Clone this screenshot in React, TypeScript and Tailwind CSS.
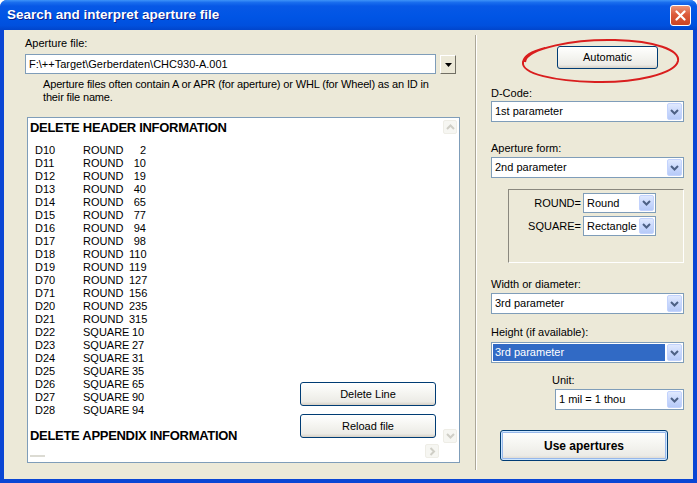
import React from "react";

const Chevron = ({ color = "#4D6185" }: { color?: string }) => (
  <svg width="9" height="6" viewBox="0 0 9 6">
    <path d="M1 1 L4.5 4.5 L8 1" fill="none" stroke={color} strokeWidth="2" />
  </svg>
);

function Combo({
  value,
  className = "",
  highlight = false,
  small = false,
}: {
  value: string;
  className?: string;
  highlight?: boolean;
  small?: boolean;
}) {
  return (
    <div
      className={`relative border border-[#7F9DB9] bg-white flex items-center ${
        small ? "h-[20px]" : "h-[21px]"
      } ${className}`}
    >
      {highlight ? (
        <div className="absolute left-[1px] top-[1px] bottom-[1px] right-[18px] bg-[#316AC5]" />
      ) : null}
      <span className={`relative pl-[3px] leading-[13px] ${highlight ? "text-white" : "text-black"}`}>
        {value}
      </span>
      <div className="absolute right-[1px] top-[1px] bottom-[1px] w-[15px] rounded-[2px] border border-[#C3D3FD] bg-[linear-gradient(180deg,#E0E9FE_0%,#C9D8FC_50%,#B6CAF8_100%)] flex items-center justify-center">
        <Chevron />
      </div>
    </div>
  );
}

function XPButton({
  children,
  className = "",
}: {
  children: React.ReactNode;
  className?: string;
}) {
  return (
    <div
      className={`flex items-center justify-center border border-[#003C74] rounded-[3px] bg-[linear-gradient(180deg,#FFFFFF_0%,#F5F5F1_45%,#ECEBE6_85%,#D6D0C5_100%)] text-black ${className}`}
    >
      {children}
    </div>
  );
}

const rows: [string, string, string][] = [
  ["D10", "ROUND", "2"],
  ["D11", "ROUND", "10"],
  ["D12", "ROUND", "19"],
  ["D13", "ROUND", "40"],
  ["D14", "ROUND", "65"],
  ["D15", "ROUND", "77"],
  ["D16", "ROUND", "94"],
  ["D17", "ROUND", "98"],
  ["D18", "ROUND", "110"],
  ["D19", "ROUND", "119"],
  ["D70", "ROUND", "127"],
  ["D71", "ROUND", "156"],
  ["D20", "ROUND", "235"],
  ["D21", "ROUND", "315"],
  ["D22", "SQUARE", "10"],
  ["D23", "SQUARE", "27"],
  ["D24", "SQUARE", "31"],
  ["D25", "SQUARE", "35"],
  ["D26", "SQUARE", "65"],
  ["D27", "SQUARE", "90"],
  ["D28", "SQUARE", "94"],
];

const FadedArrow = ({ dir, className }: { dir: "up" | "down" | "right"; className: string }) => {
  const d =
    dir === "up" ? "M1 5 L4.5 1.5 L8 5" : dir === "down" ? "M1 1 L4.5 4.5 L8 1" : "M1.5 1 L5 4.5 L1.5 8";
  const vb = dir === "right" ? "0 0 7 9" : "0 0 9 6";
  return (
    <div
      className={`absolute w-[14px] h-[14px] rounded-[2px] border border-[#EEEDE6] bg-[#F6F6F2] flex items-center justify-center ${className}`}
    >
      <svg width={dir === "right" ? 7 : 9} height={dir === "right" ? 9 : 6} viewBox={vb}>
        <path d={d} fill="none" stroke="#CFCEC6" strokeWidth="2" />
      </svg>
    </div>
  );
};

export default function App() {
  return (
    <div className="relative w-[697px] h-[483px] flex flex-col overflow-hidden rounded-t-[7px] bg-[#0A46D4] font-['Liberation_Sans',Arial,sans-serif] text-[11px] text-black">
      {/* Title bar */}
      <div className="h-[30px] shrink-0 flex items-center justify-between pl-[7px] pr-[6px] bg-[linear-gradient(180deg,#3E93F8_0%,#1A6EEE_8%,#0758E6_20%,#0055E5_55%,#0050DE_85%,#0145CB_100%)]">
        <span className="text-white font-bold text-[13.5px] leading-[16px] [text-shadow:1px_1px_0_#0A1C8A]">
          Search and interpret aperture file
        </span>
        <div className="w-[21px] h-[21px] rounded-[3px] border border-white bg-[linear-gradient(180deg,#EC9477_0%,#DC5B3B_45%,#CB4423_100%)] flex items-center justify-center">
          <svg width="11" height="11" viewBox="0 0 11 11">
            <path d="M1.5 1.5 L9.5 9.5 M9.5 1.5 L1.5 9.5" stroke="white" strokeWidth="2.2" strokeLinecap="round" />
          </svg>
        </div>
      </div>

      {/* Body */}
      <div className="flex-1 px-[4px] pb-[4px]">
        <div className="h-full bg-[#ECE9D8] flex">
          {/* Left column */}
          <div className="w-[471px] flex flex-col pl-[21px]">
            <div className="mt-[7px] leading-[13px]">Aperture file:</div>
            <div className="mt-[4px] flex items-start">
              <div className="w-[411px] h-[20px] border border-[#7F9DB9] bg-white flex items-center pl-[3px] leading-[13px]">
                F:\++Target\Gerberdaten\CHC930-A.001
              </div>
              <div className="ml-[4px] mt-[1px] w-[16px] h-[19px] border-t border-l border-t-white border-l-white border-b border-r border-b-[#716F64] border-r-[#716F64] bg-[#ECE9D8] flex items-center justify-center">
                <svg width="7" height="4" viewBox="0 0 7 4">
                  <path d="M0 0 L7 0 L3.5 4 Z" fill="black" />
                </svg>
              </div>
            </div>
            <div className="mt-[4px] pl-[18px] leading-[13px] tracking-[-0.15px]">
              <div>Aperture files often contain A or APR (for aperture) or WHL (for Wheel) as an ID in</div>
              <div>their file name.</div>
            </div>

            {/* List box */}
            <div className="relative mt-[13px] ml-[2px] w-[433px] h-[346px] border border-[#7F9DB9] bg-white overflow-hidden">
              <div className="pl-[2px] pt-[3px] text-[13px] leading-[14px] font-bold tracking-[-0.3px]">
                DELETE HEADER INFORMATION
              </div>
              <div className="mt-[9px] pl-[7px]">
                {rows.map(([code, type, num]) => (
                  <div key={code} className="h-[13px] flex leading-[13px]">
                    <span className="w-[48px]">{code}</span>
                    <span className="w-[46px] whitespace-nowrap">{type}</span>
                    {type === "ROUND" ? (
                      <span className="w-[17px] text-right">{num}</span>
                    ) : (
                      <span className="pl-[3px]">{num}</span>
                    )}
                  </div>
                ))}
              </div>
              <div className="mt-[12px] pl-[2px] text-[13px] leading-[14px] font-bold tracking-[-0.3px]">
                DELETE APPENDIX INFORMATION
              </div>

              <FadedArrow dir="up" className="right-[2px] top-[2px]" />
              <FadedArrow dir="down" className="right-[2px] top-[311px]" />
              <FadedArrow dir="right" className="left-[397px] top-[326px]" />
              <div className="absolute left-[2px] top-[337px] w-[15px] h-[2px] bg-[#DCDBD3]" />

              <XPButton className="absolute left-[272px] top-[264px] w-[136px] h-[24px]">Delete Line</XPButton>
              <XPButton className="absolute left-[272px] top-[296px] w-[136px] h-[24px]">Reload file</XPButton>
            </div>
          </div>

          {/* Separator */}
          <div className="w-[2px] mt-[5px] mb-[9px] border-l border-l-[#ACA899] border-r border-r-white" />

          {/* Right column */}
          <div className="w-[216px] flex flex-col pl-[14px]">
            <XPButton className="mt-[16px] ml-[66px] w-[101px] h-[23px]">Automatic</XPButton>

            <div className="mt-[18px] leading-[13px]">D-Code:</div>
            <Combo value="1st parameter" className="mt-[1px] w-[193px]" />

            <div className="mt-[20px] leading-[13px]">Aperture form:</div>
            <Combo value="2nd parameter" className="mt-[2px] w-[193px]" />

            <div className="mt-[11px] ml-[17px] w-[176px] h-[74px] border-t border-l border-t-[#8A887E] border-l-[#8A887E] border-b border-r border-b-white border-r-white flex flex-col pt-[3px]">
              <div className="flex items-center">
                <span className="w-[73px] text-right pr-[1px]">ROUND=</span>
                <Combo value="Round" small className="ml-[1px] w-[73px]" />
              </div>
              <div className="mt-[3px] flex items-center">
                <span className="w-[73px] text-right pr-[1px]">SQUARE=</span>
                <Combo value="Rectangle" small className="ml-[1px] w-[73px]" />
              </div>
            </div>

            <div className="mt-[15px] leading-[13px]">Width or diameter:</div>
            <Combo value="3rd parameter" className="mt-[2px] w-[193px]" />

            <div className="mt-[12px] leading-[13px]">Height (if available):</div>
            <Combo value="3rd parameter" highlight className="mt-[3px] w-[193px]" />

            <div className="mt-[11px] ml-[61px] leading-[13px]">Unit:</div>
            <Combo value="1 mil = 1 thou" className="mt-[2px] ml-[64px] w-[129px]" />

            <XPButton className="mt-[20px] ml-[9px] w-[168px] h-[31px] font-bold text-[12px] shadow-[inset_0_0_0_1px_#CEE7FF,inset_0_0_0_2px_#98B8EA]">
              Use apertures
            </XPButton>
          </div>
        </div>
      </div>

      {/* Red hand-drawn ellipse */}
      <svg className="absolute left-[515px] top-[34px]" width="172" height="54" viewBox="0 0 172 54">
        <path
          d="M10 28 C 12 14, 60 5, 100 6 C 140 7, 165 16, 163 27 C 160 40, 120 49, 80 48 C 40 47, 6 40, 8 28 C 9 22, 18 17, 30 14"
          fill="none"
          stroke="#D91E1E"
          strokeWidth="2"
        />
      </svg>
    </div>
  );
}
